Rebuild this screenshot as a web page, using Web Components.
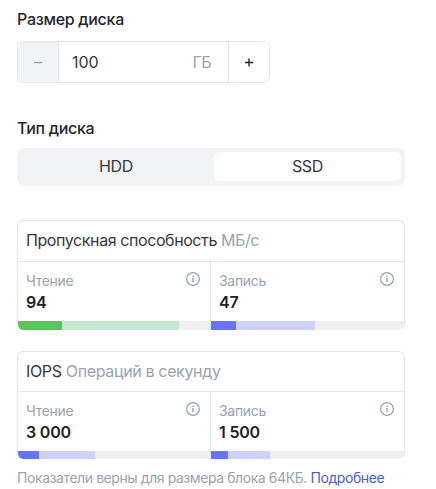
<!DOCTYPE html>
<html lang="ru"><head><meta charset="utf-8"><title>Диск</title>
<style>
body{margin:0;background:#fff;font-family:Inter,"Liberation Sans",sans-serif;color:#36383d}
</style></head><body>
<disk-form></disk-form>
<script>
const define=(name,html,init)=>customElements.define(name,class extends HTMLElement{
  constructor(){super();const t=document.createElement('template');t.innerHTML=html;
    this.attachShadow({mode:'open'}).append(t.content.cloneNode(true));}
  connectedCallback(){if(init)init(this,this.shadowRoot);}
});

define('field-label',`<style>:host{display:block;font-size:16px;line-height:20px;font-weight:500;letter-spacing:-.3px;color:#24262b;white-space:nowrap}</style><slot></slot>`);

define('size-stepper',`<style>
:host{display:flex;box-sizing:border-box;width:253px;height:42px;border:1px solid #e3e5ec;border-radius:6px;overflow:hidden;font-size:16px;line-height:40px}
.b{width:40px;display:flex;align-items:center;justify-content:center}
.minus{background:#f2f3f7;border-right:1px solid #e0e3ea;color:#98a3b3}
.plus{border-left:1px solid #e0e3ea;color:#24262b}
.v{flex:1;display:flex;justify-content:space-between;padding:0 17px 0 13px}
.u{color:#98a3b3;letter-spacing:-.6px}
</style><div class="b minus"><svg width="10" height="10"><path d="M1 5.5H9.5" stroke="currentColor" stroke-width="1.3"/></svg></div>
<div class="v"><slot></slot><span class="u"><slot name="unit"></slot></span></div>
<div class="b plus"><svg width="10" height="10"><path d="M1 5.5H9M5 1.5V9.5" stroke="currentColor" stroke-width="1.4"/></svg></div>`);

define('segment-option',`<style>:host{display:flex;align-items:center;justify-content:center;border-radius:6px;font-size:16px;line-height:18px;padding-bottom:1px;letter-spacing:-.3px}
:host([selected]){background:#fff}</style><slot></slot>`);
define('segment-switch',`<style>:host{display:grid;grid-template-columns:1fr 187px;box-sizing:border-box;height:38px;padding:4px 4px 5px 1px;border-radius:8px;background:#f2f3f7}</style><slot></slot>`);

define('info-icon',`<style>:host{display:block;width:14px;height:14px;color:#949fb1}svg{display:block}</style>
<svg width="14" height="14" viewBox="0 0 14 14" fill="none" stroke="currentColor"><circle cx="7" cy="7" r="6.4" stroke-width="1.2"/><path d="M7 6V10.3M7 3.6V4.9" stroke-width="1.4"/></svg>`);

define('metric-cell',`<style>
:host{display:flex;flex-direction:column;min-width:0}
.t{flex:1;display:flex;justify-content:space-between;padding:10px 10px 0 8px}
.l{font-size:14px;line-height:18px;color:#98a3b3;letter-spacing:-.3px}
.v{font-size:16px;line-height:22px;font-weight:600;color:#1f2126;margin-top:1px;white-space:nowrap;letter-spacing:-.2px}
.bar{display:flex;height:var(--bar,8px);background:#f0f0f0}
.a{background:#6673fa}.c{background:#cdd3f8}
:host([tone=green]) .a{background:#5bc45d}:host([tone=green]) .c{background:#c6e8d0}
</style><div class="t"><div><div class="l"></div><div class="v"><slot></slot></div></div><info-icon></info-icon></div>
<div class="bar"><div class="a"></div><div class="c"></div></div>`,(h,r)=>{
  r.querySelector('.l').textContent=h.getAttribute('label');
  r.querySelector('.a').style.width=h.getAttribute('used')+'px';
  r.querySelector('.c').style.width=h.getAttribute('reserve')+'px';
});

define('metric-card',`<style>
:host{display:block;box-sizing:border-box;width:388px;border-radius:6px;overflow:hidden;border:1px solid #e3e5ec;border-bottom:0}
.h{height:var(--head,40px);box-sizing:border-box;border-bottom:1px solid #e3e5ec;padding-left:8px;font-size:16px;line-height:39px;white-space:nowrap;letter-spacing:var(--track,-.35px)}
.g{display:grid;grid-template-columns:192px 1px 1fr;height:var(--body,67px)}
.d{background:#e0e3ea}
::slotted([slot=unit]){color:#98a3b3}
</style><div class="h"><slot name="title"></slot> <slot name="unit"></slot></div>
<div class="g"><slot name="read"></slot><i class="d"></i><slot name="write"></slot></div>`);

define('disk-form',`<style>
:host{display:block;box-sizing:border-box;width:405px;padding:9px 0 0 17px}
size-stepper{margin-top:12px}
.type{margin-top:35px}
segment-switch{margin-top:10px}
.one{margin-top:34px;--head:41px;--body:68px;--bar:9px;--track:-.41px}
.two{margin-top:21px}
p{margin:9px 0 0;font-size:14px;line-height:20px;color:#98a3b3;white-space:nowrap;letter-spacing:-.42px}
a{color:#4a5fd0;text-decoration:none}
</style>
<field-label>Размер диска</field-label>
<size-stepper>100<span slot="unit">ГБ</span></size-stepper>
<field-label class="type">Тип диска</field-label>
<segment-switch><segment-option>HDD</segment-option><segment-option selected>SSD</segment-option></segment-switch>
<metric-card class="one"><span slot="title">Пропускная способность</span><span slot="unit">МБ/с</span>
<metric-cell slot="read" label="Чтение" tone="green" used="44" reserve="117">94</metric-cell>
<metric-cell slot="write" label="Запись" used="24.5" reserve="79">47</metric-cell></metric-card>
<metric-card class="two"><span slot="title">IOPS</span><span slot="unit">Операций в секунду</span>
<metric-cell slot="read" label="Чтение" used="21" reserve="55.5">3 000</metric-cell>
<metric-cell slot="write" label="Запись" used="17" reserve="42">1 500</metric-cell></metric-card>
<p>Показатели верны для размера блока 64КБ. <a>Подробнее</a></p>`);
</script></body></html>
